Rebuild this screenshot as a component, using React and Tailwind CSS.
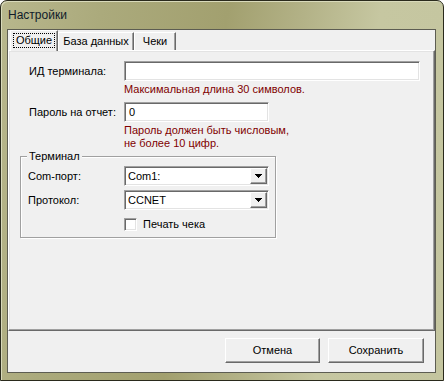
import React from 'react';

const sunken =
  'border border-t-[#a0a0a0] border-l-[#a0a0a0] border-r-white border-b-white shadow-[inset_1px_1px_0_#696969,inset_-1px_-1px_0_#e3e3e3]';
const raised =
  'border border-t-white border-l-white border-r-[#696969] border-b-[#696969] shadow-[inset_-1px_-1px_0_#a0a0a0]';

const Arrow = () => (
  <svg width="7" height="4" shapeRendering="crispEdges">
    <rect x="0" y="0" width="7" height="1" fill="#000" />
    <rect x="1" y="1" width="5" height="1" fill="#000" />
    <rect x="2" y="2" width="3" height="1" fill="#000" />
    <rect x="3" y="3" width="1" height="1" fill="#000" />
  </svg>
);

const Combo = ({ value }) => (
  <div className={`w-[145px] h-[20px] bg-white flex p-px ${sunken}`}>
    <div className="flex-1 pl-[2px] flex items-center">{value}</div>
    <div className={`w-[17px] bg-[#f0f0f0] flex items-center justify-center ${raised}`}>
      <Arrow />
    </div>
  </div>
);

const App = () => {
  return (
    <div className="w-[444px] h-[381px] flex flex-col rounded-t-[7px] border border-[#2a2a1c] bg-[linear-gradient(100deg,#b8b78d_0%,#abaa7c_20%,#a2a06f_45%,#b3b287_60%,#c6c7a1_75%,#c4c59f_100%)] shadow-[inset_1px_1px_0_#d9dabb] font-['Liberation_Sans',Arial,sans-serif] text-[11px] leading-[13px] text-black">
      <div className="h-[28px] shrink-0 pl-[7px] flex items-center text-[12px] text-[#0f1b2a]">Настройки</div>

      <div className="ml-[6px] mr-[7px] mb-[7px] flex-1 flex flex-col border border-[#5d5d52] bg-[#f0f0f0]">
        {/* tabs */}
        <div className="h-[20px] shrink-0 flex items-end pl-[2px] relative z-10">
          <div className="w-[48px] h-[21px] -mb-px bg-[#f0f0f0] border-t border-l border-t-white border-l-white border-r border-r-[#696969] shadow-[inset_-1px_0_0_#a0a0a0] flex items-start justify-center pt-[2px]">
            <span className="border border-dotted border-black px-[2px] h-[15px] flex items-center">Общие</span>
          </div>
          <div className="w-[76px] h-[18px] bg-[#f0f0f0] border-t border-l border-t-white border-l-white border-r border-r-[#696969] shadow-[inset_-1px_0_0_#a0a0a0] flex items-center justify-center">База данных</div>
          <div className="w-[42px] h-[18px] bg-[#f0f0f0] border-t border-l border-t-white border-l-white border-r border-r-[#696969] shadow-[inset_-1px_0_0_#a0a0a0] flex items-center justify-center">Чеки</div>
        </div>

        {/* panel */}
        <div className="h-[281px] shrink-0 border border-t-white border-l-white border-r-[#696969] border-b-[#696969] shadow-[inset_-1px_-1px_0_#a0a0a0,inset_1px_1px_0_#e3e3e3] pt-[10px] pl-[20px] flex flex-col">
          <div className="flex items-center">
            <div className="w-[95px] pt-px">ИД терминала:</div>
            <div className={`w-[296px] h-[20px] bg-white ${sunken}`}></div>
          </div>
          <div className="pl-[95px] mt-[2px] text-[#800000]">Максимальная длина 30 символов.</div>

          <div className="flex items-center mt-[6px]">
            <div className="w-[95px] pt-px">Пароль на отчет:</div>
            <div className={`w-[145px] h-[20px] bg-white pl-[4px] flex items-center ${sunken}`}>0</div>
          </div>
          <div className="pl-[95px] mt-[2px] text-[#800000]">
            <div>Пароль должен быть числовым,</div>
            <div>не более 10 цифр.</div>
          </div>

          <fieldset className="-ml-[9px] w-[256px] border border-[#a0a0a0] shadow-[1px_1px_0_#fff,inset_1px_1px_0_#fff] pl-[7px] pt-[3px] pb-[6px]">
            <legend className="-ml-[1px] px-[2px] bg-[#f0f0f0]">Терминал</legend>
            <div className="flex items-center">
              <div className="w-[96px] pt-px">Com-порт:</div>
              <Combo value="Com1:" />
            </div>
            <div className="flex items-center mt-[4px]">
              <div className="w-[96px] pt-px">Протокол:</div>
              <Combo value="CCNET" />
            </div>
            <div className="flex items-center mt-[8px] pl-[96px]">
              <div className={`w-[13px] h-[13px] bg-white ${sunken}`}></div>
              <span className="ml-[6px]">Печать чека</span>
            </div>
          </fieldset>
        </div>

        {/* buttons */}
        <div className="mt-[7px] flex justify-end gap-[8px] pr-[11px]">
          <div className={`w-[95px] h-[25px] bg-[#f0f0f0] flex items-center justify-center ${raised}`}>Отмена</div>
          <div className={`w-[96px] h-[25px] bg-[#f0f0f0] flex items-center justify-center ${raised}`}>Сохранить</div>
        </div>
      </div>
    </div>
  );
};

export default App;
